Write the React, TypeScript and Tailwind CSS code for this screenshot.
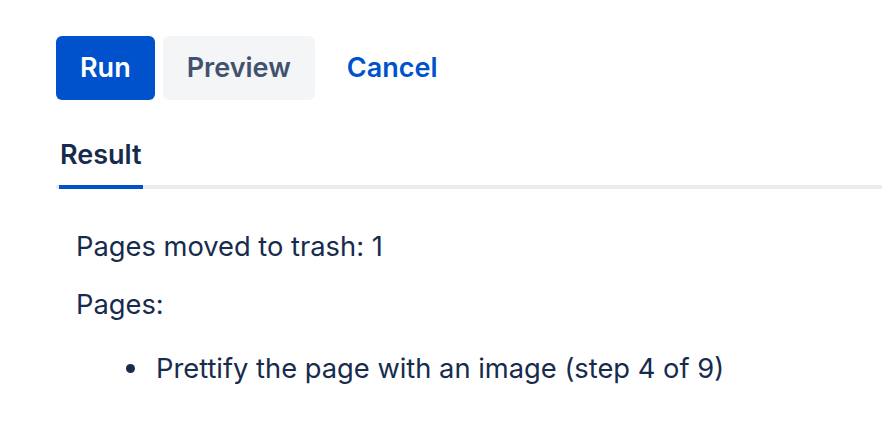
import React from 'react'

function App() {
  return (
    <main className="min-h-[438px] w-[882px] bg-white pt-9 pl-14 font-['Inter',sans-serif] text-[#172B4D]">
      <div className="flex gap-2">
        <button className="h-16 rounded-[6px] bg-[#0052CC] px-6 text-[27px] font-semibold text-white">Run</button>
        <button className="h-16 rounded-[6px] bg-[#F4F5F7] px-6 text-[27px] font-semibold text-[#42526E]">Preview</button>
        <button className="h-16 rounded-[6px] px-6 text-[27px] font-semibold text-[#0052CC]">Cancel</button>
      </div>
      <div className="mt-[35px] flex border-b-[4px] border-[#EBECF0] pl-1">
        <div className="relative pb-[9px] text-[27px] font-semibold">
          Result
          <span className="absolute -bottom-[4px] -left-px -right-px h-[4px] bg-[#0052CC]" />
        </div>
      </div>
      <div className="pl-5 pt-[42px] text-[27.3px] leading-[32px]">
        <p>Pages moved to trash: 1</p>
        <p className="mt-[26px]">Pages:</p>
        <ul className="mt-[32px] pl-[50px]">
          <li className="flex items-center">
            <span className="mr-[21px] h-[9px] w-[9px] rounded-full bg-[#172B4D]" />
            Prettify the page with an image (step 4 of 9)
          </li>
        </ul>
      </div>
    </main>
  )
}

export default App
